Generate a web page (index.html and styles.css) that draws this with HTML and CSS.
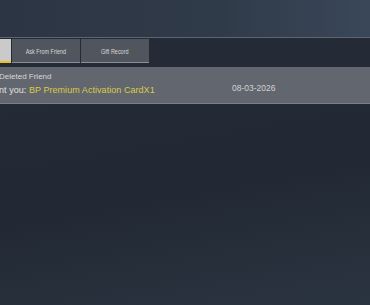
FILE: index.html
```html
<!DOCTYPE html>
<html lang="en">
<head>
    <meta charset="UTF-8">
    <meta name="viewport" content="width=device-width, initial-scale=1.0">
    <title>Gift Record</title>
    <link rel="stylesheet" href="styles.css">
</head>
<body>
    <!-- top header area -->
    <div class="header"></div>

    <!-- tabs -->
    <div class="tabbar">
        <div class="tab active"></div>
        <div class="tab"><span class="tab-label">Ask From Friend</span></div>
        <div class="tab"><span class="tab-label">Gift Record</span></div>
    </div>

    <!-- gift list -->
    <div class="list">
        <div class="record">
            <div class="record-info">
                <p class="sender">Deleted Friend</p>
                <p class="message">nt you: <span class="item">BP Premium Activation CardX1</span></p>
            </div>
            <p class="date">08-03-2026</p>
        </div>
    </div>
</body>
</html>
```

FILE: styles.css
```css
body {
    margin: 0;
    padding: 0;
    width: 370px;
    height: 305px;
    overflow: hidden;
    font-family: "Liberation Sans", Arial, sans-serif;
    background: linear-gradient(170deg, #252c37 0%, #222934 60%, #2a3440 100%);
    color: #d4d4d4;
}
.header {
    height: 37px;
    background: linear-gradient(90deg, #2c3543 0%, #303b4a 60%, #3a4758 100%);
    border-bottom: 1px solid #5d6572;
}
.tabbar {
    display: flex;
    height: 29px;
    padding-top: 1px;
    box-sizing: border-box;
    background-color: #252b36;
}
.tab {
    width: 68px;
    height: 24px;
    margin-right: 1px;
    background-color: #50555e;
    border-bottom: 1px solid #8a8f98;
    box-sizing: border-box;
    font-size: 7px;
    color: #dadada;
    display: flex;
    align-items: center;
    justify-content: center;
    padding-top: 1px;
}
.tab-label {
    display: inline-block;
    white-space: nowrap;
    transform: scaleX(0.78);
}
.tab.active {
    width: 11px;
    background-color: #cacaca;
    border-bottom: 2px solid #e7c520;
}
.record {
    display: flex;
    height: 36px;
    background-color: #62666f;
    border-bottom: 1px solid #7b7f87;
}
.record-info {
    width: 233px;
    margin-left: -1px;
}
.record p {
    margin: 0;
    white-space: nowrap;
}
.sender {
    font-size: 8px;
    padding-top: 5px;
    color: #d8d8d8;
}
.message {
    font-size: 9px;
    padding-top: 4px;
    color: #e0e0e0;
    letter-spacing: 0.05px;
}
.item {
    color: #dccb45;
}
.date {
    font-size: 8.5px;
    padding-top: 16px;
    color: #d2d2d2;
}
```
